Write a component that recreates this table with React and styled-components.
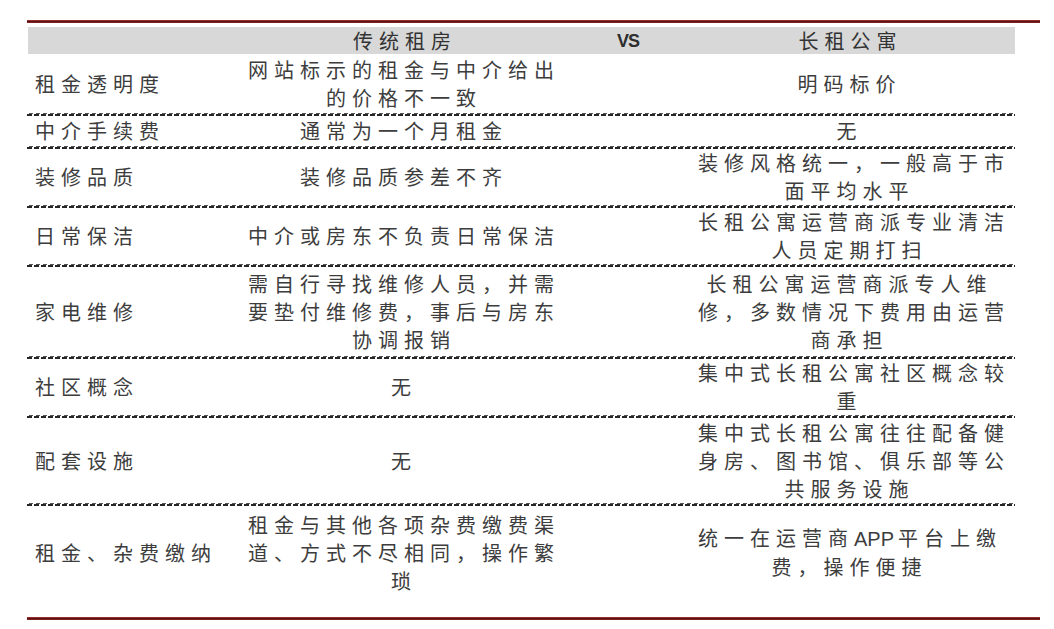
import React from 'react';
import styled, { createGlobalStyle } from 'styled-components';

const Global = createGlobalStyle`
  html, body { margin: 0; padding: 0; background: #ffffff; }
  body { font-family: "Noto Sans CJK SC", "Noto Sans", sans-serif; color: #3a3a3a; }
`;

const Page = styled.div`
  padding: 20px 0 0 27px;
  width: 1013px;
`;

const Rule = styled.div`
  height: 3px;
  width: 1013px;
  background: linear-gradient(#b04040 0, #5c1010 50%, #8a2a2a 100%);
`;

const Table = styled.div`
  width: 988px;
  display: flex;
  flex-direction: column;
  padding-top: 4px;
`;

const Columns = styled.div`
  display: grid;
  grid-template-columns: 213px 322px 130px 323px;
  align-items: center;
`;

const Header = styled(Columns)`
  height: 27px;
  margin-left: 1px;
  background: #d8d8d8;
`;

const Row = styled(Columns)`
  height: ${(p) => p.$h}px;
  box-sizing: border-box;
  padding-bottom: ${(p) => (p.$last ? 18 : 3)}px;
  background-image: ${(p) =>
    p.$last
      ? 'none'
      : 'repeating-linear-gradient(90deg, #262626 0 5px, transparent 5px 7px), repeating-linear-gradient(90deg, #555 0 4px, transparent 4px 7px)'};
  background-size: 100% 2px, 100% 1px;
  background-position: left 0 bottom 0, left 2px bottom 2px;
  background-repeat: no-repeat;
`;

const Cell = styled.div`
  font-size: 20px;
  line-height: 28px;
  letter-spacing: 6px;
  white-space: nowrap;
  text-align: ${(p) => (p.$left ? 'left' : 'center')};
  padding-left: ${(p) => (p.$left ? 8 : 6)}px;
  padding-right: ${(p) => p.$pr || 0}px;
  color: #3d3d3d;
`;

const HeadCell = styled(Cell)`
  color: #333;
`;

const Latin = styled.span`
  font-family: "Liberation Sans", Arial, sans-serif;
  letter-spacing: 0;
  margin-right: 4px;
`;

const Vs = styled.div`
  font-family: "Liberation Sans", Arial, sans-serif;
  font-weight: bold;
  font-size: 18px;
  letter-spacing: -1px;
  color: #2e2e2e;
  text-align: center;
`;

const Lines = ({ text }) =>
  text.split('/').map((t, i, a) => (
    <React.Fragment key={i}>
      {t.split(/(APP)/).map((part, j) =>
        part === 'APP' ? <Latin key={j}>{part}</Latin> : <React.Fragment key={j}>{part}</React.Fragment>
      )}
      {i < a.length - 1 && <br />}
    </React.Fragment>
  ));

const rows = [
  { h: 62, a: '租金透明度', b: '网站标示的租金与中介给出/的价格不一致', c: '明码标价' },
  { h: 33, a: '中介手续费', b: '通常为一个月租金', c: '无' },
  { h: 59, a: '装修品质', b: '装修品质参差不齐', c: '装修风格统一，一般高于市/面平均水平' },
  { h: 59, a: '日常保洁', b: '中介或房东不负责日常保洁', c: '长租公寓运营商派专业清洁/人员定期打扫' },
  {
    h: 92,
    a: '家电维修',
    b: '需自行寻找维修人员，并需/要垫付维修费，事后与房东/协调报销',
    c: '长租公寓运营商派专人维/修，多数情况下费用由运营/商承担',
  },
  { h: 59, a: '社区概念', b: '无', c: '集中式长租公寓社区概念较/重' },
  { h: 88, a: '配套设施', b: '无', c: '集中式长租公寓往往配备健/身房、图书馆、俱乐部等公/共服务设施' },
  {
    h: 111,
    a: '租金、杂费缴纳',
    b: '租金与其他各项杂费缴费渠/道、方式不尽相同，操作繁/琐',
    c: '统一在运营商APP平台上缴/费，操作便捷',
    last: true,
  },
];

export default function App() {
  return (
    <>
      <Global />
      <Page>
        <Rule />
        <Table>
          <Header>
            <HeadCell $left />
            <HeadCell>传统租房</HeadCell>
            <Vs>VS</Vs>
            <HeadCell $pr={14}>长租公寓</HeadCell>
          </Header>
          {rows.map((r, i) => (
            <Row key={i} $h={r.h} $last={r.last}>
              <Cell $left>{r.a}</Cell>
              <Cell>
                <Lines text={r.b} />
              </Cell>
              <div />
              <Cell $pr={14}>
                <Lines text={r.c} />
              </Cell>
            </Row>
          ))}
        </Table>
        <Rule />
      </Page>
    </>
  );
}
